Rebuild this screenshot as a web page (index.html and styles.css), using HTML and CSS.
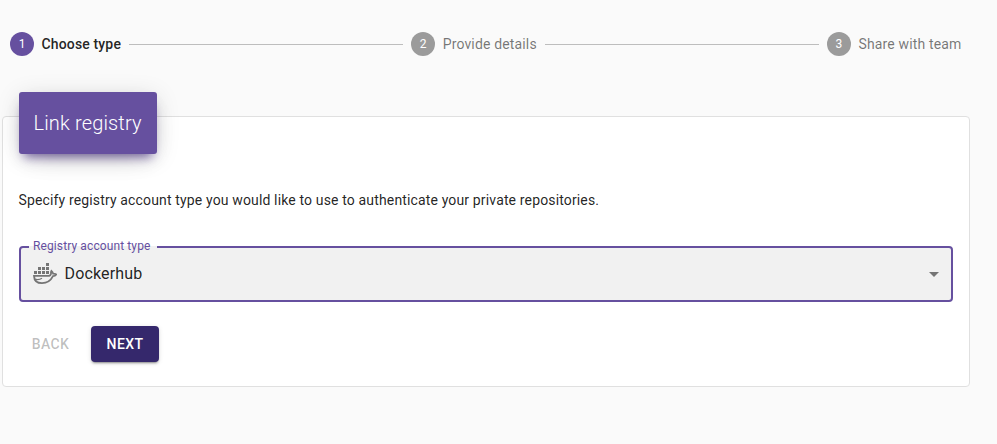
FILE: index.html
```html
<!DOCTYPE html>
<html lang="en">
<head>
<meta charset="utf-8">
<title>Link registry</title>
<link rel="stylesheet" href="styles.css">
</head>
<body>
<ol class="stepper">
  <li class="step step-active"><span class="step-icon">1</span><span class="step-label">Choose type</span></li>
  <li class="connector"></li>
  <li class="step"><span class="step-icon">2</span><span class="step-label">Provide details</span></li>
  <li class="connector"></li>
  <li class="step"><span class="step-icon">3</span><span class="step-label">Share with team</span></li>
</ol>
<main class="card">
  <h1 class="card-title">Link registry</h1>
  <p class="intro">Specify registry account type you would like to use to authenticate your private repositories.</p>
  <div class="select">
    <span class="select-label">Registry account type</span>
    <svg class="docker" viewBox="0 0 24 24" width="24" height="24">
      <path d="M13 1h3v3h-3zM5 5h3v3h-3zM9 5h3v3h-3zM13 5h3v3h-3zM1 9h3v3h-3zM5 9h3v3h-3zM9 9h3v3h-3zM13 9h3v3h-3z"/>
      <path class="whale" d="M1 13.900h13.500c2.500 0 3.700-1 3.500-2.700-.1-.9-.1-1.600.4-2.300 1 .8 1.500 1.700 1.700 2.700 1.300 0 2.300.2 3.200.8-.8 1.200-1.900 1.700-3.300 1.800-2.400 4.700-5.800 7-11 7C4.200 21.200 1.200 18.500 1 13.900z"/>
      <path class="whale-mouth" d="M1.500 17.200c3 .7 5.600.3 7.500-.9"/>
    </svg>
    <span class="select-value">Dockerhub</span>
    <svg class="arrow" viewBox="0 0 24 24" width="24" height="24"><path d="M7 10l5 5 5-5z"/></svg>
  </div>
  <div class="actions">
    <button class="btn" disabled>BACK</button>
    <button class="btn btn-primary">NEXT</button>
  </div>
</main>
</body>
</html>
```
FILE: styles.css
```css
* {
  box-sizing: border-box;
}

body {
  margin: 0;
  padding: 32px 27px 0 2px;
  background: #fafafa;
  color: rgba(0, 0, 0, 0.87);
  font: 400 14px/20px Roboto, sans-serif;
  letter-spacing: 0.15px;
}

.stepper {
  display: flex;
  align-items: center;
  margin: 0;
  padding: 0 8.6px 0 8px;
  list-style: none;
}

.step {
  display: flex;
  align-items: center;
  color: rgba(0, 0, 0, 0.54);
}

.step-icon {
  width: 24px;
  height: 24px;
  margin-right: 7.5px;
  border-radius: 50%;
  background: #9b9b9b;
  color: #fff;
  font-size: 12px;
  letter-spacing: 0;
  line-height: 24px;
  text-align: center;
}

.step-active {
  color: rgba(0, 0, 0, 0.87);
  font-weight: 500;
}

.step-active .step-icon {
  background: #66509f;
  font-weight: 400;
}

.connector {
  flex: 1;
  height: 1px;
  margin: 0 8px;
  background: #bdbdbd;
}

.card {
  height: 271px;
  margin-top: 60px;
  padding: 0 16px;
  border: 1px solid #e0e0e0;
  border-radius: 4px;
  background: #fff;
}

.card-title {
  width: 138px;
  height: 62px;
  margin: -25px 0 0;
  padding: 0 14.5px;
  border-radius: 3px;
  background: #66509f;
  box-shadow: 0 10px 30px -12px rgba(0, 0, 0, 0.2), 0 4px 25px rgba(0, 0, 0, 0.12), 0 8px 10px -5px rgba(102, 80, 159, 0.8);
  color: #fff;
  font-size: 20px;
  font-weight: 300;
  line-height: 62px;
  white-space: nowrap;
}

.intro {
  margin: 36px 0 36px -0.5px;
  letter-spacing: 0.146px;
}

.select {
  position: relative;
  display: flex;
  align-items: center;
  height: 56px;
  padding: 0 5px 0 12px;
  border: 2px solid #66509f;
  border-radius: 4px;
  background: #f1f1f1;
  font-size: 16px;
}

.select-label {
  position: absolute;
  top: -10px;
  left: 8px;
  padding: 0 7px 0 4px;
  background: linear-gradient(#fff 8px, #f1f1f1 8px);
  color: #66509f;
  font-size: 12px;
  letter-spacing: 0.11px;
  line-height: 16px;
}

.docker {
  margin-right: 7.5px;
  fill: #757575;
}

.whale {
  fill: none;
  stroke: #757575;
  stroke-width: 1.8;
}

.whale-mouth {
  fill: none;
  stroke: #757575;
  stroke-width: 1.2;
}

.select-value {
  flex: 1;
}

.arrow {
  fill: #757575;
}

.actions {
  display: flex;
  gap: 8px;
  margin-top: 24px;
}

.btn {
  min-width: 64px;
  height: 36px;
  padding: 0 1px 0 0;
  border: 0;
  border-radius: 4px;
  background: none;
  color: rgba(0, 0, 0, 0.26);
  font: 500 14px/36px Roboto, sans-serif;
  letter-spacing: 0.4px;
}

.btn-primary {
  width: 68px;
  padding: 0;
  background: #35286c;
  box-shadow: 0 3px 1px -2px rgba(0, 0, 0, 0.2), 0 2px 2px rgba(0, 0, 0, 0.14), 0 1px 5px rgba(0, 0, 0, 0.12);
  color: #fff;
}
```
